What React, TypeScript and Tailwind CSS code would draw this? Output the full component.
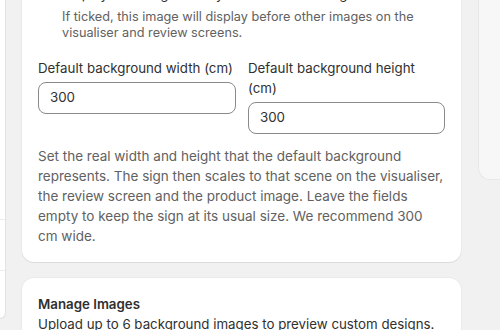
import React from "react";

export default function App() {
  return (
    <div
      className="w-[500px] h-[330px] overflow-hidden bg-[#f1f1f1] flex items-start"
      style={{ fontFamily: "Inter, 'Noto Sans', sans-serif" }}
    >
      {/* left panel */}
      <div className="w-[6px] h-[318px] shrink-0 bg-white border-r border-[#e3e3e3] rounded-br-[12px] shadow-[0_1px_0_0_rgba(26,26,26,0.07)] flex flex-col">
        <div className="h-[219px]" />
        <div className="h-[51px] border-t border-[#ebebeb]" />
        <div className="flex-1 border-t border-[#ebebeb]" />
      </div>

      {/* main column */}
      <div className="ml-[16px] w-[439px] shrink-0 flex flex-col gap-[16px]">
        <div className="mt-[-32px] bg-white rounded-[12px] shadow-[0_1px_0_0_rgba(26,26,26,0.07),0_0_0_1px_rgba(26,26,26,0.03)] p-[16px] flex flex-col">
          <div className="flex items-start gap-[8px] h-[20px]">
            <div className="mt-[-10px] w-[16px] h-[16px] shrink-0 rounded-[4px] border border-[#8a8a8a] bg-white" />
            <span className="text-[13.3px] leading-[20px] text-[#303030] whitespace-nowrap">
              Display this image first by default in the designer
            </span>
          </div>
          <p className="mt-[5px] pl-[24px] text-[12.7px] leading-[16px] text-[#616161]">
            If ticked, this image will display before other images on the visualiser and review screens.
          </p>

          <div className="mt-[17px] grid grid-cols-[198px_197px] gap-[12px] items-start">
            <div className="flex flex-col gap-[4px]">
              <label className="text-[13.3px] leading-[20px] text-[#303030]">Default background width (cm)</label>
              <div className="h-[32px] rounded-[8px] border border-[#8a8a8a] bg-white px-[11px] flex items-center text-[13.3px] text-[#303030]">
                300
              </div>
            </div>
            <div className="flex flex-col gap-[4px]">
              <label className="text-[13.3px] leading-[20px] text-[#303030]">Default background height (cm)</label>
              <div className="h-[32px] rounded-[8px] border border-[#8a8a8a] bg-white px-[11px] flex items-center text-[13.3px] text-[#303030]">
                300
              </div>
            </div>
          </div>

          <p className="mt-[12px] text-[13.5px] leading-[20px] text-[#616161]">
            Set the real width and height that the default background represents. The sign then scales to that scene on the visualiser, the review screen and the product image. Leave the fields empty to keep the sign at its usual size. We recommend 300
            <br />
            cm wide.
          </p>
        </div>

        <div className="bg-white rounded-[12px] shadow-[0_1px_0_0_rgba(26,26,26,0.07),0_0_0_1px_rgba(26,26,26,0.03)] p-[16px] flex flex-col h-[80px]">
          <h2 className="text-[13.3px] leading-[20px] font-semibold text-[#303030]">Manage Images</h2>
          <p className="text-[13.3px] leading-[20px] text-[#303030] whitespace-nowrap">
            Upload up to 6 background images to preview custom designs.
          </p>
        </div>
      </div>

      {/* right panel */}
      <div className="ml-[17px] w-[22px] h-[180px] shrink-0 bg-[#f7f7f7] border-l border-b border-[#e8e8e8] rounded-bl-[12px]" />
    </div>
  );
}
